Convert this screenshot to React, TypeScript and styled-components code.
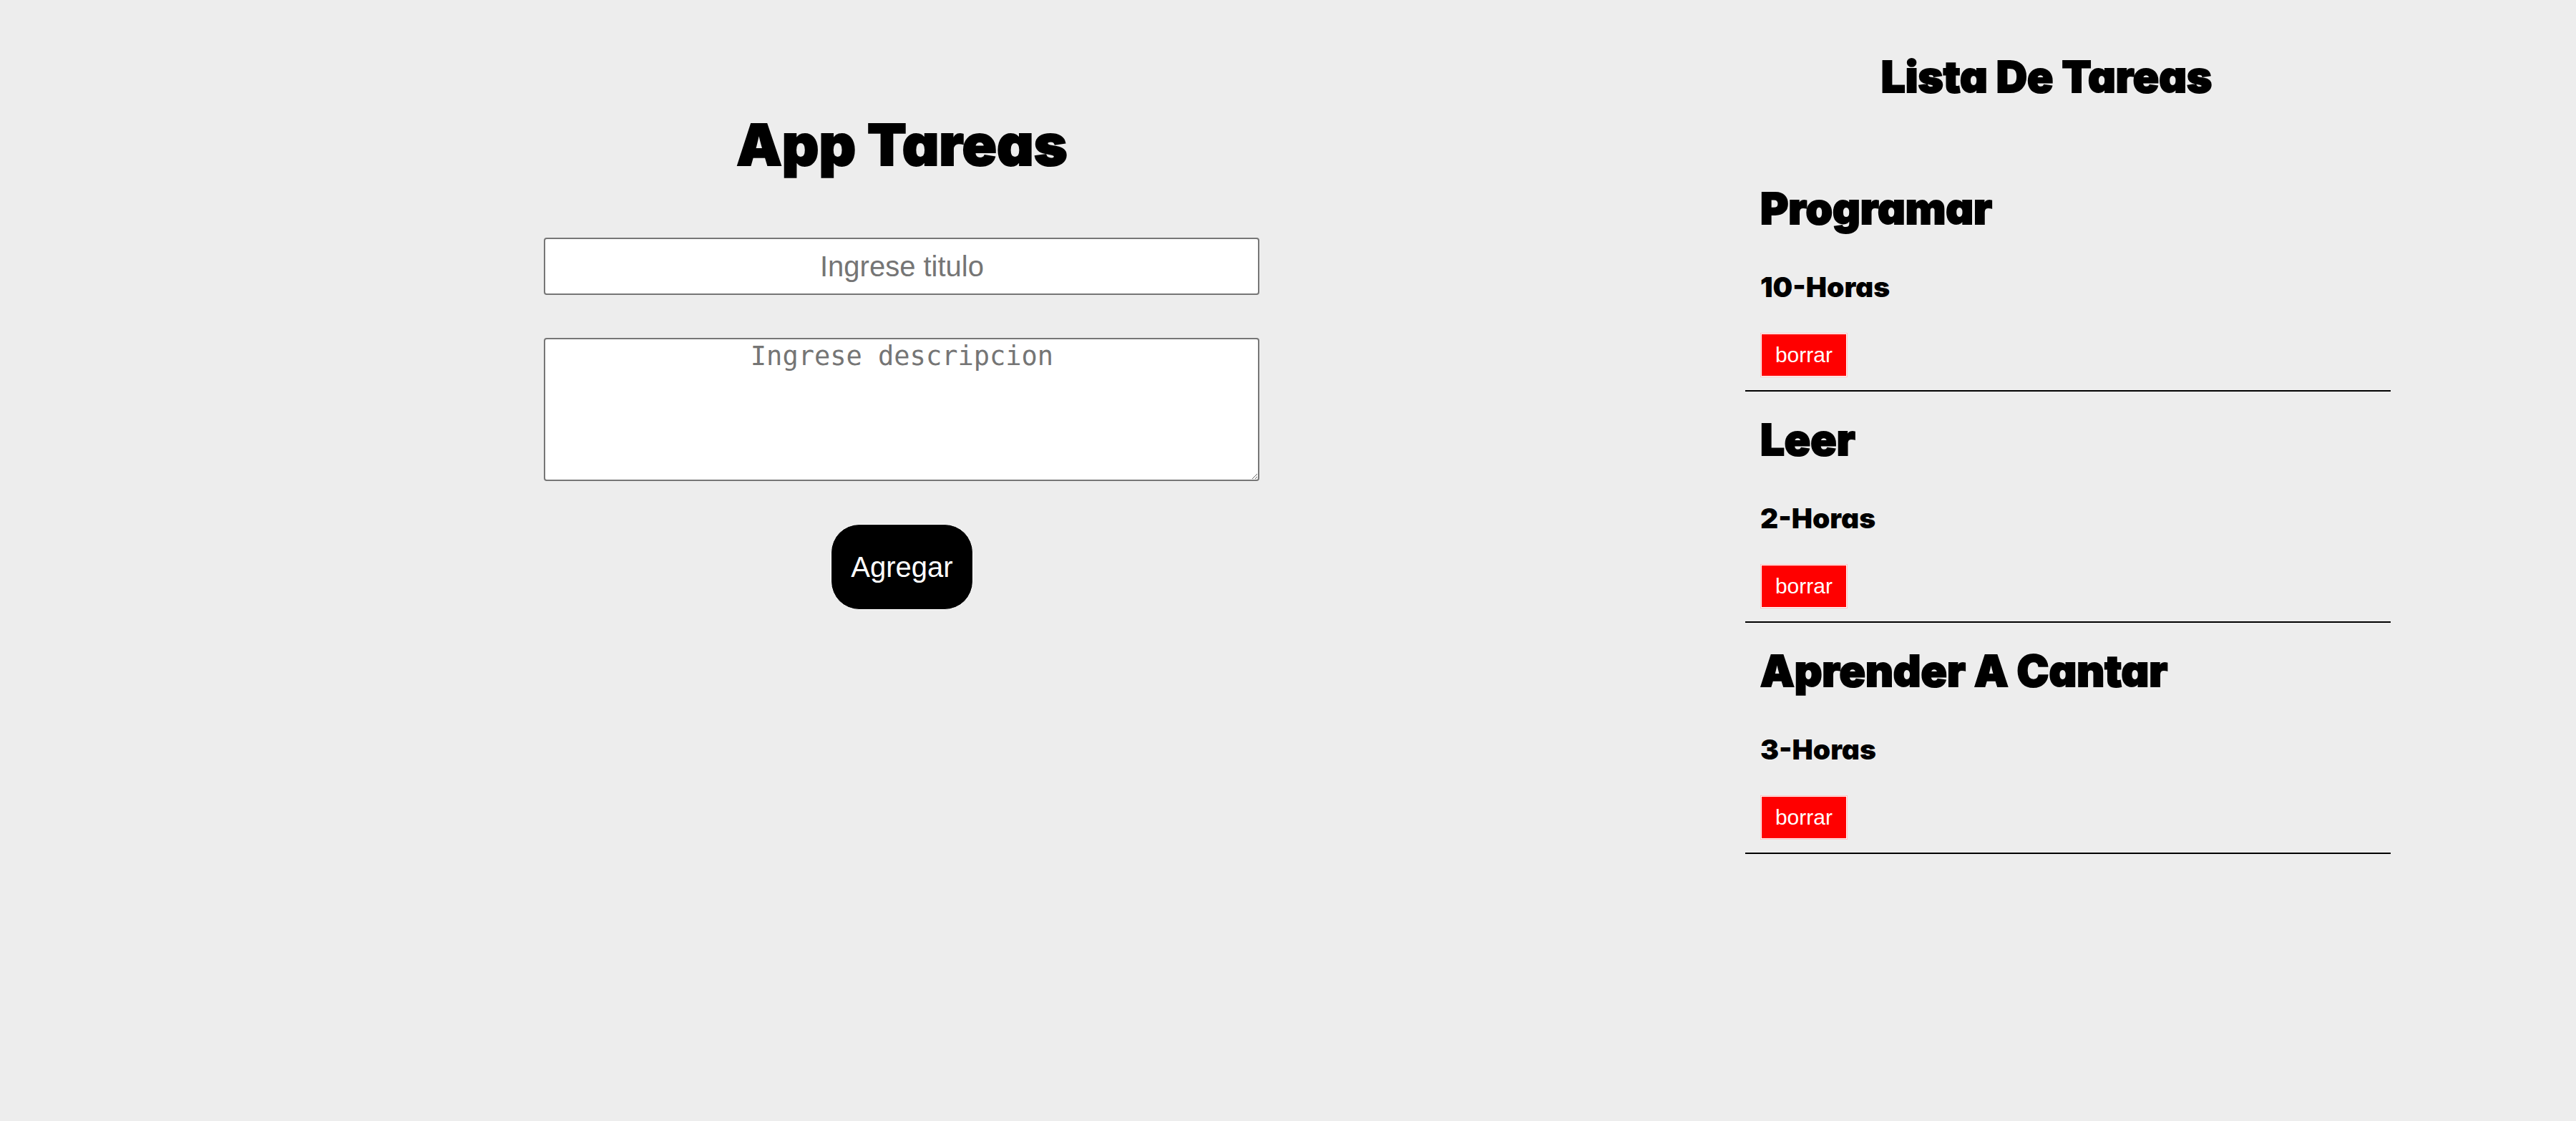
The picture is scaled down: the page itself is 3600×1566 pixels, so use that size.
import React, { useState } from "react";
import styled, { createGlobalStyle } from "styled-components";

const GlobalStyle = createGlobalStyle`
  *, *::before, *::after {
    box-sizing: border-box;
  }

  body {
    margin: 0;
    min-height: 100vh;
    background: #ededed;
    color: #000;
    font-family: Inter, "Open Sans", sans-serif;
    font-weight: 900;
    font-feature-settings: "cv11";
  }
`;

const Page = styled.div`
  display: flex;
  align-items: flex-start;
  padding-right: 259px;
`;

const FormSection = styled.main`
  flex: 1;
  display: flex;
  flex-direction: column;
  align-items: center;
  padding: 154px 0 0 82px;
`;

const AppTitle = styled.h1`
  margin: 0 0 82px;
  font-size: 80px;
  line-height: 96px;
  font-weight: 900;
  -webkit-text-stroke: 2px #000;
`;

const TaskForm = styled.form`
  display: flex;
  flex-direction: column;
  align-items: center;
  gap: 60px;
  width: 100%;
  max-width: 1000px;
`;

const TitleInput = styled.input`
  width: 100%;
  height: 80px;
  padding: 2px;
  border: 2px solid #767676;
  border-radius: 4px;
  background: #fff;
  font-family: "Liberation Sans", Arial, sans-serif;
  font-size: 40px;
  text-align: center;

  &::placeholder {
    color: #757575;
  }
`;

const DescriptionInput = styled.textarea`
  display: block;
  width: 100%;
  height: 200px;
  padding: 2px;
  border: 2px solid #767676;
  border-radius: 4px;
  background: #fff;
  font-family: "DejaVu Sans Mono", monospace;
  font-size: 37px;
  line-height: 44px;
  text-align: center;

  &::placeholder {
    color: #757575;
  }
`;

const AddButton = styled.button`
  height: 120px;
  padding: 0 27px;
  border: 1px solid #fff;
  border-radius: 40px;
  background: #000;
  color: #fff;
  font-family: "Liberation Sans", Arial, sans-serif;
  font-size: 40px;
  cursor: pointer;
`;

const ListSection = styled.aside`
  width: 27%;
  padding-top: 71px;
`;

const ListTitle = styled.h2`
  margin: 0 0 81px;
  padding-right: 60px;
  font-size: 60px;
  line-height: 72px;
  font-weight: 900;
  text-align: center;
  -webkit-text-stroke: 2px #000;
`;

const TaskList = styled.ul`
  margin: 0;
  padding: 0;
  list-style: none;
`;

const TaskItem = styled.li`
  display: flex;
  flex-direction: column;
  align-items: flex-start;
  padding: 31px 21px 18px;
  border-bottom: 2px solid #000;
`;

const TaskTitle = styled.h2`
  margin: 0 0 50px;
  font-size: 60px;
  line-height: 72px;
  font-weight: 900;
  -webkit-text-stroke: 2px #000;
`;

const TaskDetail = styled.h3`
  margin: 0 0 40px;
  font-size: 39px;
  line-height: 48px;
  font-weight: 900;
`;

const DeleteButton = styled.button`
  height: 62px;
  padding: 0 20px;
  border: 1px solid #fbc4c4;
  box-shadow: inset 0 0 0 1px #fff;
  background: #f00;
  color: #fff;
  font-family: "Liberation Sans", Arial, sans-serif;
  font-size: 30px;
  cursor: pointer;
`;

interface Task {
  id: number;
  title: string;
  detail: string;
}

const initialTasks: Task[] = [
  { id: 1, title: "Programar", detail: "10-Horas" },
  { id: 2, title: "Leer", detail: "2-Horas" },
  { id: 3, title: "Aprender A Cantar", detail: "3-Horas" },
];

export default function App() {
  const [tasks, setTasks] = useState<Task[]>(initialTasks);
  const [title, setTitle] = useState("");
  const [detail, setDetail] = useState("");

  const addTask = (event: React.FormEvent) => {
    event.preventDefault();
    if (!title.trim()) return;
    setTasks((current) => [...current, { id: Date.now(), title, detail }]);
    setTitle("");
    setDetail("");
  };

  const removeTask = (id: number) =>
    setTasks((current) => current.filter((task) => task.id !== id));

  return (
    <>
      <GlobalStyle />
      <Page>
        <FormSection>
          <AppTitle>App Tareas</AppTitle>
          <TaskForm onSubmit={addTask}>
            <TitleInput
              type="text"
              aria-label="Ingrese titulo"
              placeholder="Ingrese titulo"
              value={title}
              onChange={(event) => setTitle(event.target.value)}
            />
            <DescriptionInput
              aria-label="Ingrese descripcion"
              placeholder="Ingrese descripcion"
              value={detail}
              onChange={(event) => setDetail(event.target.value)}
            />
            <AddButton type="submit">Agregar</AddButton>
          </TaskForm>
        </FormSection>
        <ListSection>
          <ListTitle>Lista De Tareas</ListTitle>
          <TaskList>
            {tasks.map((task) => (
              <TaskItem key={task.id}>
                <TaskTitle>{task.title}</TaskTitle>
                <TaskDetail>{task.detail}</TaskDetail>
                <DeleteButton type="button" onClick={() => removeTask(task.id)}>
                  borrar
                </DeleteButton>
              </TaskItem>
            ))}
          </TaskList>
        </ListSection>
      </Page>
    </>
  );
}
